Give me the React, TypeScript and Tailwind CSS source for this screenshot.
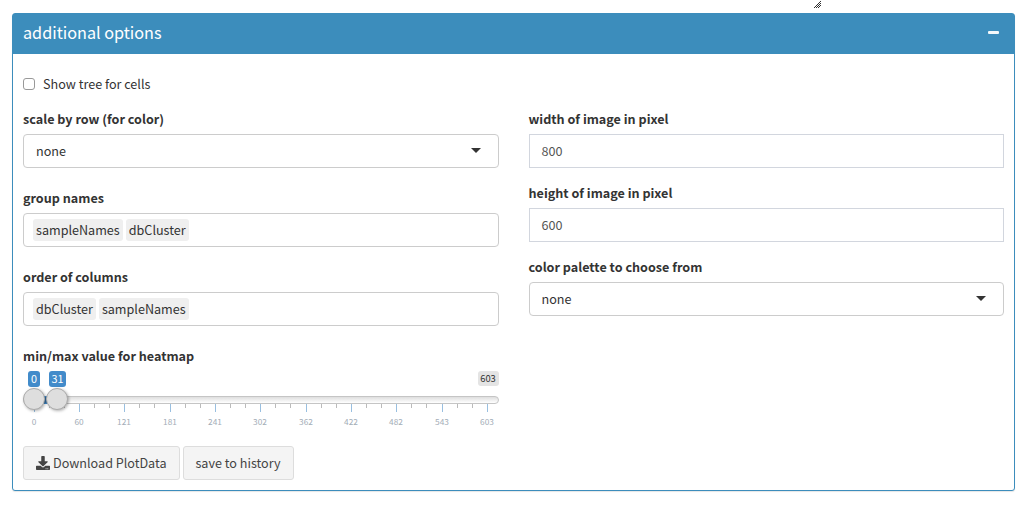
import type { ReactNode } from "react";
import { FaDownload } from "react-icons/fa";

function Label({ children }: { children: ReactNode }) {
  return <div className="mb-[5px] h-5 text-[12.6px] leading-5 font-bold text-[#333]">{children}</div>;
}

function Select({ label }: { label: string }) {
  return (
    <div>
      <Label>{label}</Label>
      <div className="flex h-[34px] items-center justify-between rounded border border-[#ccc] pr-[17px] pl-3">
        <span>none</span>
        <span className="mb-px border-x-[5px] border-t-[5px] border-x-transparent border-t-[#333]" />
      </div>
    </div>
  );
}

function Tags({ label, items }: { label: string; items: string[] }) {
  return (
    <div>
      <Label>{label}</Label>
      <div className="flex h-[34px] items-center gap-[3px] rounded border border-[#ccc] px-[9px]">
        {items.map((t) => (
          <span key={t} className="h-[22px] rounded-[3px] bg-[#efefef] px-[3px] leading-[22px]">{t}</span>
        ))}
      </div>
    </div>
  );
}

function NumberField({ label, value }: { label: string; value: string }) {
  return (
    <div>
      <Label>{label}</Label>
      <div className="flex h-[34px] items-center border border-[#d2d6de] px-3 text-[#555]">{value}</div>
    </div>
  );
}

const marks = [0, 60, 121, 181, 241, 302, 362, 422, 482, 543, 603];

function Slider() {
  return (
    <div>
      <Label>min/max value for heatmap</Label>
      <div className="relative h-[60px]">
        <span className="absolute top-0 left-[5px] h-4 w-3 rounded-[3px] bg-[#428bca] text-center text-[10.8px] leading-[14px] text-white">0</span>
        <span className="absolute top-0 left-[26px] h-4 w-[17px] rounded-[3px] bg-[#428bca] text-center text-[10.8px] leading-[14px] text-white">31</span>
        <span className="absolute top-0 right-0 h-[15px] w-[21px] rounded-[3px] bg-[#e4e4e4] text-center text-[9.4px] leading-[15px] text-[#333]">603</span>
        <div className="absolute top-[25px] left-0 h-2 w-full rounded-lg border border-[#c5c5c5] bg-linear-to-b from-[#dedede] to-white" />
        <div className="absolute top-[25px] left-[11px] h-2 w-[23px] border-y border-[#428bca] bg-[#3573aa]" />
        {marks.map((m, i) => (
          <div key={m} className="absolute top-[33px]" style={{ left: Math.round(10.8 + i * 45.3) }}>
            <div className="absolute top-0 left-0 h-2 w-px bg-[#99bfe0]" />
            {i < 10 && <div className="absolute top-0 left-[15px] h-1 w-px bg-[#bbb]" />}
            {i < 10 && <div className="absolute top-0 left-[30px] h-1 w-px bg-[#bbb]" />}
            <span className="absolute top-3 left-[-15px] w-[30px] text-center text-[8.3px] leading-[10px] text-[#a3adb7]">{m}</span>
          </div>
        ))}
        <div className="absolute top-[17px] left-0 size-[22px] rounded-full border border-[#ababab] bg-[#dedede] shadow-[1px_1px_3px_rgba(0,0,0,0.3)]" />
        <div className="absolute top-[17px] left-[23px] size-[22px] rounded-full border border-[#ababab] bg-[#dedede] shadow-[1px_1px_3px_rgba(0,0,0,0.3)]" />
      </div>
    </div>
  );
}

const resizeDots = [[6, 0], [5, 1], [4, 2], [6, 2], [3, 3], [5, 3], [2, 4], [4, 4], [6, 4], [1, 5], [3, 5], [5, 5], [0, 6], [2, 6], [4, 6]];

export default function App() {
  return (
    <div className="h-[509px] overflow-hidden bg-white pr-[11px] pl-3 font-['Noto_Sans_CJK_SC',sans-serif] text-[12.6px] leading-5 text-[#333]">
      <div className="flex h-[13px] items-start pl-[802px]">
        <svg className="mt-px size-[7px]" viewBox="0 0 7 7" shapeRendering="crispEdges">
          {resizeDots.map(([x, y]) => (
            <rect key={`${x}-${y}`} x={x} y={y} width="1" height="1" fill="#333" />
          ))}
        </svg>
      </div>
      <section className="h-[478px] rounded-[3px] border border-[#3c8dbc] bg-white shadow-[0_1px_1px_rgba(0,0,0,0.1)]">
        <header className="flex h-10 items-center justify-between bg-[#3c8dbc] pr-[15px] pl-[10px] text-white">
          <h3 className="mb-[5px] text-[16.2px] leading-5">additional options</h3>
          <span className="mb-[3px] h-[3px] w-[11px] rounded-[1px] bg-[#f3f8fb]" />
        </header>
        <div className="px-[10px] pt-5">
          <label className="mb-[15px] flex h-5 items-center">
            <span className="mr-2 size-3 rounded-[3px] border border-[#999] bg-white" />
            Show tree for cells
          </label>
          <div className="grid grid-cols-2 gap-[30px]">
            <div className="flex flex-col gap-5">
              <Select label="scale by row (for color)" />
              <Tags label="group names" items={["sampleNames", "dbCluster"]} />
              <Tags label="order of columns" items={["dbCluster", "sampleNames"]} />
              <Slider />
            </div>
            <div className="flex flex-col gap-[15px]">
              <NumberField label="width of image in pixel" value="800" />
              <NumberField label="height of image in pixel" value="600" />
              <Select label="color palette to choose from" />
            </div>
          </div>
          <div className="mt-[15px] flex gap-[3px] text-[#444]">
            <button className="flex h-[34px] w-[157px] items-center gap-[3px] rounded-[3px] border border-[#ddd] bg-[#f4f4f4] pl-3 whitespace-nowrap">
              <FaDownload className="size-[14px]" />
              Download PlotData
            </button>
            <button className="h-[34px] w-[111px] rounded-[3px] border border-[#ddd] bg-[#f4f4f4] pr-px whitespace-nowrap">save to history</button>
          </div>
        </div>
      </section>
    </div>
  );
}
